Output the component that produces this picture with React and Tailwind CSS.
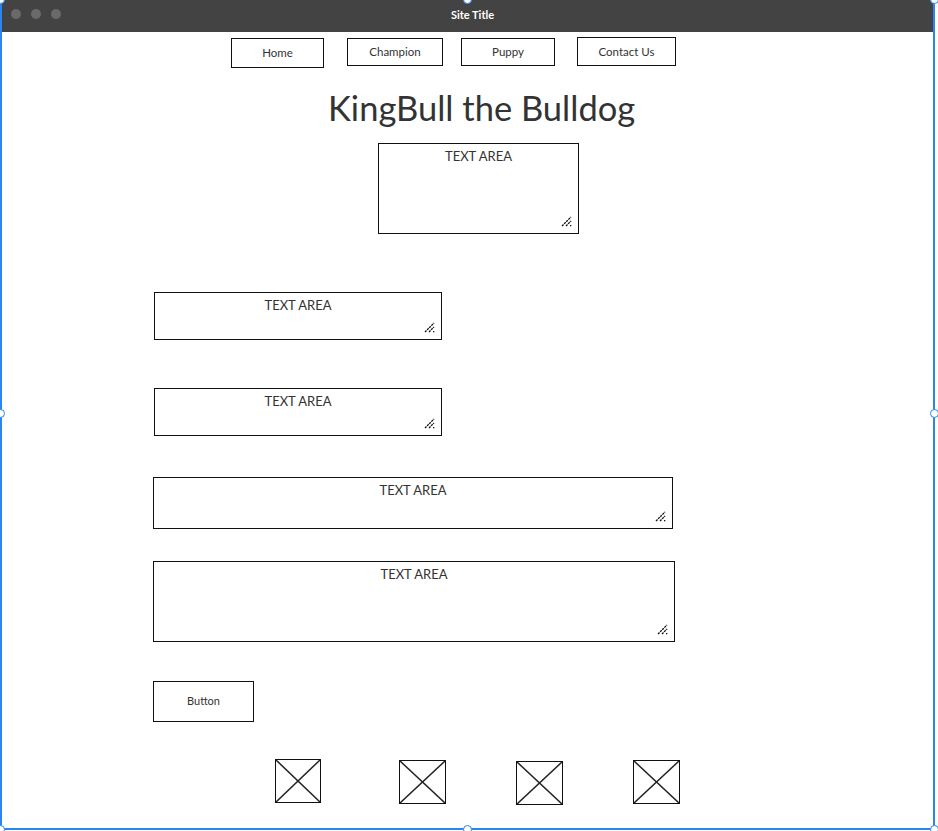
import React from "react";

const font = { fontFamily: "Lato, 'Open Sans', sans-serif" };

function Grip() {
  return (
    <svg className="absolute right-[6px] bottom-[6px]" width="11" height="11" viewBox="0 0 11 11">
      <line x1="1" y1="10" x2="10" y2="1" stroke="#111" strokeWidth="1.3" strokeDasharray="2.2 0.8" />
      <line x1="5" y1="10" x2="10" y2="5" stroke="#111" strokeWidth="1.3" strokeDasharray="2.2 0.8" />
      <rect x="9" y="9" width="1.3" height="1.3" fill="#111" />
    </svg>
  );
}

function TextArea({ className }) {
  return (
    <div className={"relative border border-[#111] bg-white text-center text-[13px] leading-[16px] text-[#333] pt-[4px] " + className}>
      TEXT AREA
      <Grip />
    </div>
  );
}

function ImgPh({ className }) {
  return (
    <div className={"border border-[#111] " + className}>
      <svg className="w-full h-full" viewBox="0 0 100 100" preserveAspectRatio="none">
        <line x1="0" y1="0" x2="100" y2="100" stroke="#222" strokeWidth="1.5" vectorEffect="non-scaling-stroke" />
        <line x1="100" y1="0" x2="0" y2="100" stroke="#222" strokeWidth="1.5" vectorEffect="non-scaling-stroke" />
      </svg>
    </div>
  );
}

function NavBtn({ children, className }) {
  return (
    <div className={"flex items-center justify-center border border-[#111] text-[11.5px] text-[#333] " + className}>
      {children}
    </div>
  );
}

function Handle({ className }) {
  return (
    <div className={"absolute w-[9px] h-[9px] rounded-full bg-white border-[1.5px] border-[#2a86ee] " + className} />
  );
}

export default function App() {
  return (
    <div className="relative w-[938px] h-[831px] bg-white overflow-hidden" style={font}>
      <div className="w-[935px] h-[830px] border-l-2 border-r-2 border-b-2 border-[#2a86ee] flex flex-col">
        {/* title bar */}
        <div className="h-[32px] shrink-0 bg-[#434343] flex items-center pl-[9px]">
          <div className="flex gap-[10px] -mt-[4px]">
            <div className="w-[10px] h-[10px] rounded-full bg-[#6a6a6a]" />
            <div className="w-[10px] h-[10px] rounded-full bg-[#6a6a6a]" />
            <div className="w-[10px] h-[10px] rounded-full bg-[#6a6a6a]" />
          </div>
          <div className="ml-[390px] -mt-[2px] text-white text-[11px] font-bold">Site Title</div>
        </div>

        {/* nav */}
        <div className="flex items-start mt-[5px]">
          <NavBtn className="ml-[229px] mt-[1px] w-[93px] h-[30px]">Home</NavBtn>
          <NavBtn className="ml-[23px] mt-[1px] w-[96px] h-[28px]">Champion</NavBtn>
          <NavBtn className="ml-[18px] mt-[1px] w-[94px] h-[28px]">Puppy</NavBtn>
          <NavBtn className="ml-[22px] w-[99px] h-[29px]">Contact Us</NavBtn>
        </div>

        {/* heading */}
        <div className="mt-[20px] h-[40px] leading-[40px] ml-[326px] text-[34.5px] text-[#333] whitespace-nowrap">
          KingBull the Bulldog
        </div>

        <TextArea className="mt-[15px] ml-[376px] w-[201px] h-[91px]" />
        <TextArea className="mt-[58px] ml-[152px] w-[288px] h-[48px]" />
        <TextArea className="mt-[48px] ml-[152px] w-[288px] h-[48px]" />
        <TextArea className="mt-[41px] ml-[151px] w-[520px] h-[52px]" />
        <TextArea className="mt-[32px] ml-[151px] w-[522px] h-[81px]" />

        <div className="mt-[39px] ml-[151px] w-[101px] h-[41px] border border-[#111] flex items-center justify-center text-[11px] text-[#333]">
          Button
        </div>

        <div className="flex items-start mt-[37px]">
          <ImgPh className="ml-[273px] w-[46px] h-[44px]" />
          <ImgPh className="ml-[78px] mt-[1px] w-[47px] h-[44px]" />
          <ImgPh className="ml-[70px] mt-[2px] w-[47px] h-[44px]" />
          <ImgPh className="ml-[70px] mt-[1px] w-[47px] h-[44px]" />
        </div>
      </div>

      <Handle className="left-[-4px] top-[-5px]" />
      <Handle className="left-[463px] top-[-5px]" />
      <Handle className="left-[930px] top-[-5px]" />
      <Handle className="left-[-4px] top-[409px]" />
      <Handle className="left-[930px] top-[409px]" />
      <Handle className="left-[-4px] top-[825px]" />
      <Handle className="left-[463px] top-[825px]" />
      <Handle className="left-[930px] top-[825px]" />
    </div>
  );
}
